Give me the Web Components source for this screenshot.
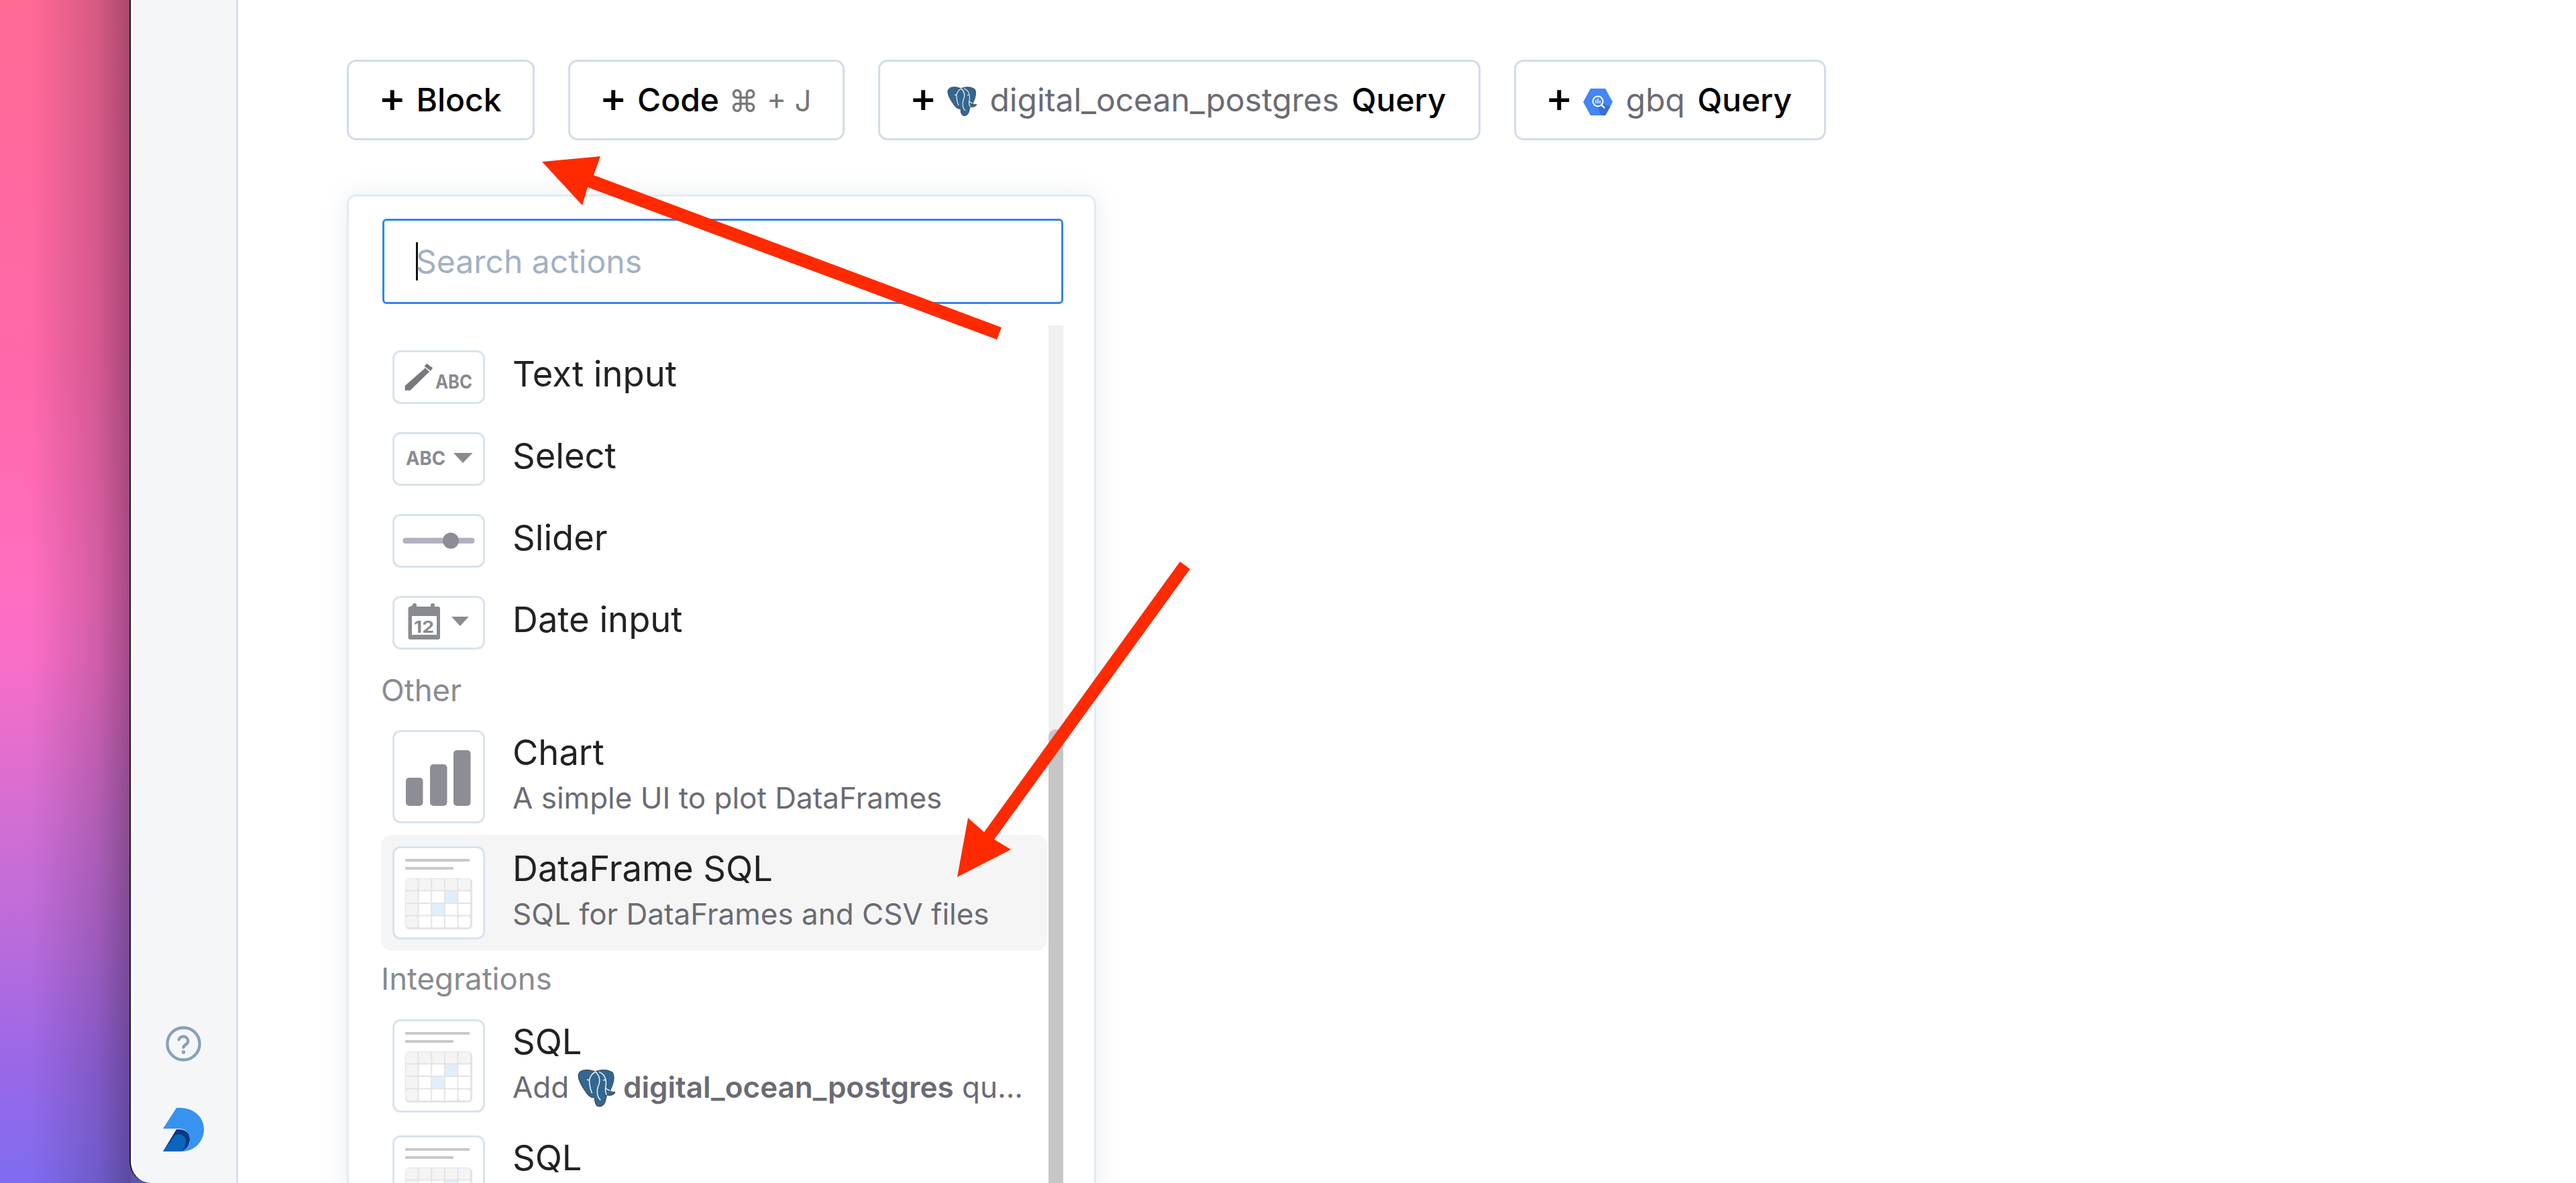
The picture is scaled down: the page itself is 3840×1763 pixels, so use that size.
<!DOCTYPE html>
<html>
<head>
<meta charset="utf-8">
<title>Add block menu</title>
<style>
  html, body { margin: 0; height: 100%; overflow: hidden; background: #fff; }
  body { font-family: Inter, "Noto Sans", sans-serif; }
</style>
</head>
<body>
<app-window>
  <add-button slot="actions"><b>Block</b></add-button>
  <add-button slot="actions"><b>Code</b> <i>⌘ + J</i></add-button>
  <add-button slot="actions"><pg-icon></pg-icon> <span>digital_ocean_postgres</span> <b class="query">Query</b></add-button>
  <add-button slot="actions"><gbq-icon></gbq-icon> <span>gbq</span> <b class="query">Query</b></add-button>
  <action-menu slot="menu">
    <menu-row icon="text" title="Text input"></menu-row>
    <menu-row icon="select" title="Select"></menu-row>
    <menu-row icon="slider" title="Slider"></menu-row>
    <menu-row icon="date" title="Date input"></menu-row>
    <menu-label>Other</menu-label>
    <menu-row big icon="chart" title="Chart">A simple UI to plot DataFrames</menu-row>
    <menu-row big active icon="sql" title="DataFrame SQL">SQL for DataFrames and CSV files</menu-row>
    <menu-label tall>Integrations</menu-label>
    <menu-row big icon="sql" title="SQL">Add <pg-icon large></pg-icon> <strong>digital_ocean_postgres</strong> qu...</menu-row>
    <menu-row big icon="sql" title="SQL">&nbsp;</menu-row>
  </action-menu>
</app-window>
<arrow-overlay></arrow-overlay>

<script>
class AppWindow extends HTMLElement {
  constructor() {
    super();
    this.shadow = this.attachShadow({ mode: "open" });
    this.shadow.innerHTML = `
    <style>
      :host { display: flex; height: 1763px; overflow: hidden; }
      .desktop {
        width: 195px;
        flex: none;
        background:
          linear-gradient(90deg, rgba(40,25,50,0) 22%, rgba(40,25,50,.1) 50%, rgba(40,25,50,.2) 75%, rgba(40,25,50,.42) 100%),
          linear-gradient(180deg, #ff6a95 0%, #ff68a8 30%, #ff6ec0 50%, #f86ec8 56%, #d06ed4 70%, #b86bdc 80%, #9a68e8 90%, #7f6cf0 100%);
      }
      .window { flex: 1; display: flex; min-width: 0; background: #5a55b0; }
      .side {
        width: 157px;
        flex: none;
        background: #f4f6f8;
        border-left: 2px solid #1c1a22;
        border-right: 3px solid #d6e0ea;
        border-bottom-left-radius: 32px;
        box-shadow: inset 3px 0 0 #fff;
        display: flex;
        flex-direction: column;
        align-items: center;
        justify-content: flex-end;
        padding-bottom: 47px;
        gap: 69px;
        margin-left: -2px;
      }
      .side svg { display: block; }
      .main { flex: 1; padding: 89px 0 0 162px; background: #fff; min-width: 0; }
      .actions { display: flex; gap: 50px; }
      .menu { margin-top: 81px; }
    </style>
    <div class="desktop"></div>
    <div class="window">
      <div class="side">
        <svg width="53" height="53" viewBox="0 0 24 24" fill="none" stroke="#88a1b8" stroke-width="2" stroke-linecap="round" stroke-linejoin="round">
          <circle cx="12" cy="12" r="10.9"/>
          <path d="M8.9 9.2a3.2 3.2 0 0 1 6.2 1c0 2.2-3.1 2.7-3.1 4.2"/>
          <path d="M12 17.6v.1" stroke-width="2.4"/>
        </svg>
        <svg width="61" height="65" viewBox="0 0 61 65">
          <path fill="#0b3a80" d="M0 65 20 32h4c10 0 17 7 16 15 0 8-5 15-12 18z"/>
          <path fill="#0a66bd" d="M0 65 18 41c3-2 8-2 11 0 4 2 6 6 5 10-1 6-3 10-7 14z"/>
          <path fill="#3793ef" d="M20 0h6c20 0 35 14 35 32 0 19-15 33-33 33h-2c10-3 15-11 14-19-1-9-7-15-16-15H0z"/>
        </svg>
      </div>
      <div class="main">
        <div class="actions"><slot name="actions"></slot></div>
        <div class="menu"><slot name="menu"></slot></div>
      </div>
    </div>
  `;
  }
}

class AddButton extends HTMLElement {
  constructor() {
    super();
    this.shadow = this.attachShadow({ mode: "open" });
    this.shadow.innerHTML = `
    <style>
      :host {
        display: flex;
        align-items: center;
        height: 120px;
        box-sizing: border-box;
        padding: 0 46px 2px 44px;
        border: 3px solid #d3dce7;
        border-radius: 14px;
        background: #fff;
        font-size: 48px;
        color: #6b6b73;
        white-space: nowrap;
      }
      .plus { font-size: 62px; font-weight: 500; color: #000; line-height: 1; margin-right: 15px; position: relative; top: -3px; }
      ::slotted(b) { font-weight: 500; color: #000; }
      ::slotted(b.query) { margin: 0 2px 0 5px; }
      ::slotted(i) { font-style: normal; color: #777; font-size: 44px; margin-left: 1px; }
      ::slotted(pg-icon), ::slotted(gbq-icon) { margin-right: 6px; }
    </style>
    <span class="plus">+</span><span><slot></slot></span>
  `;
  }
}

class PgIcon extends HTMLElement {
  constructor() {
    super();
    this.shadow = this.attachShadow({ mode: "open" });
    this.shadow.innerHTML = `
    <style>
      :host { display: inline-block; width: 44px; height: 44px; vertical-align: -7px; }
      :host([large]) { width: 56px; height: 57px; vertical-align: -14px; }
      svg { display: block; width: 100%; height: 100%; }
    </style>
    <svg viewBox="0 0 44 44">
      <path fill="#336791" stroke="#4a4a4a" stroke-width="1" d="M8 1C14 0 17 2 21 3 26 0 36 0 41 4 44 8 42 18 38 25 40 28 44 26 44 27 42 30 38 31 34 30 33 36 32 43 26 43.5 21 44 20 38 20 33 17 34 13 32 10 27 5 20 0 12 1 6 2 3 5 1 8 1Z"/>
      <path fill="none" stroke="#fff" stroke-width="1.1" d="M21 3C15 6 13 12 14 17 15 21 15 25 17 28M14 13 11 12M21 3C26 8 27 14 24 20 22 26 23 33 27 36M25 3C33 6 34 14 33 20 32 25 33 28 34 30M30 13 33 12M38 25C36 24 34 24 33 22"/>
    </svg>
  `;
  }
}

class GbqIcon extends HTMLElement {
  constructor() {
    super();
    this.shadow = this.attachShadow({ mode: "open" });
    this.shadow.innerHTML = `
    <style>
      :host { display: inline-block; width: 44px; height: 40px; vertical-align: -6px; }
      svg { display: block; width: 100%; height: 100%; }
    </style>
    <svg viewBox="0 0 44 40">
      <path fill="#4386f5" d="M11 0H33L44 20 33 40H11L0 20Z"/>
      <path fill="#3a6fd0" d="M26 26 30 23 40.7 27 33 40H27L22 28Z"/>
      <circle cx="22" cy="19" r="7.5" fill="none" stroke="#fff" stroke-width="2"/>
      <path stroke="#fff" stroke-width="2.4" d="M27.5 24.5 32 29"/>
      <path stroke="#fff" stroke-width="1.5" d="M19 17v5M22 15v7M25 18v4"/>
    </svg>
  `;
  }
}

const gridCells = () => {
  let out = "";
  for (let r = 0; r < 4; r++) {
    for (let c = 0; c < 5; c++) {
      const x = 19 + c * 19.6, y = 48 + r * 18.5;
      let fill = r === 0 || c === 0 ? "#f4f4f4" : "#fff";
      if ((r === 1 && c === 3) || (r === 2 && c === 2)) fill = "#e0eefc";
      const corner = (r === 0 || r === 3) && (c === 0 || c === 4);
      out += `<rect x="${x + 1}" y="${y + 1}" width="17.6" height="16.5" rx="${corner ? 4 : 0}" fill="${fill}"/>`;
    }
  }
  return out;
};

const ICONS = {
  text: `<svg viewBox="0 0 138 80" fill="#77787e">
      <path d="M18.6 53 49 26.3 55 32 26.6 59.7H18.6z"/>
      <path d="M51 19.7 60 26.3 57 30.7 47.6 24z"/>
      <text x="64" y="57" font-size="29" font-weight="700" textLength="55" lengthAdjust="spacingAndGlyphs" fill="#8a8b91">ABC</text>
    </svg>`,
  select: `<svg viewBox="0 0 138 80" fill="#8a8b91">
      <text x="20" y="49" font-size="29" font-weight="700" textLength="59" lengthAdjust="spacingAndGlyphs">ABC</text>
      <path d="M91 31h28.500L105 46z"/>
    </svg>`,
  slider: `<svg viewBox="0 0 138 80">
      <rect x="15.400" y="35.600" width="107" height="8.500" rx="4" fill="#b2b2bf"/>
      <ellipse cx="87" cy="39.700" rx="12" ry="12" fill="#8d8d99"/>
    </svg>`,
  date: `<svg viewBox="0 0 138 80" fill="#8a8b91">
      <path d="M30 14a3 3 0 0 1 6 0v2h21v-2a3 3 0 0 1 6 0v2h5a3 3 0 0 1 3 3v43a3 3 0 0 1-3 3H26.500a3 3 0 0 1-3-3V19a3 3 0 0 1 3-3z"/>
      <rect x="29" y="30" width="37" height="28" fill="#fff"/>
      <text x="32" y="55" font-size="24" font-weight="700" textLength="30" lengthAdjust="spacingAndGlyphs">12</text>
      <path d="M88 31h25.700L101 45z"/>
    </svg>`,
  chart: `<svg viewBox="0 0 138 139" fill="#8d8d95">
      <rect x="20" y="71" width="25.5" height="42" rx="5"/>
      <rect x="56" y="51" width="25.5" height="62" rx="5"/>
      <rect x="91" y="30" width="25.5" height="83" rx="5"/>
    </svg>`,
  sql: `<svg viewBox="0 0 138 139">
      <rect x="19" y="19" width="96" height="4" fill="#c9c9c9"/>
      <rect x="19" y="31" width="72" height="4" fill="#c9c9c9"/>
      <rect x="19" y="48" width="100" height="76" rx="6" fill="#e4e4e4"/>
      ${gridCells()}
    </svg>`
};

class MenuRow extends HTMLElement {
  constructor() {
    super();
    this.shadow = this.attachShadow({ mode: "open" });
  }

  render() {
    this.shadow.innerHTML = `
    <style>
      :host {
        display: flex;
        align-items: center;
        height: 122px;
        padding-left: 17px;
        gap: 41px;
        border-radius: 16px;
        white-space: nowrap;
      }
      :host([big]) { height: 173px; }
      :host([active]) { background: #f5f5f5; }
      .thumb {
        width: 138px;
        height: 80px;
        flex: none;
        box-sizing: border-box;
        border: 3px solid #d9e3ed;
        border-radius: 12px;
        background: #fff;
        overflow: hidden;
      }
      :host([big]) .thumb { height: 139px; }
      svg { display: block; width: calc(100% + 6px); height: calc(100% + 6px); margin: -3px; }
      .text { padding-bottom: 10px; }
      :host([big]) .text { padding-bottom: 5px; }
      .title { font-size: 52.5px; color: #222; line-height: 68px; }
      .desc { font-size: 44px; color: #6b6b73; line-height: 68px; }
      .desc ::slotted(strong) { font-weight: 600; }
    </style>
    <div class="thumb">${ICONS[this.getAttribute("icon")]}</div>
    <div class="text">
      <div class="title">${this.getAttribute("title")}</div>
      ${this.hasAttribute("big") ? '<div class="desc"><slot></slot></div>' : ""}
    </div>
  `;
  }

  connectedCallback() {
    this.render();
  }
}

class MenuLabel extends HTMLElement {
  constructor() {
    super();
    this.shadow = this.attachShadow({ mode: "open" });
    this.shadow.innerHTML = `
    <style>
      :host { display: block; height: 82px; line-height: 80px; font-size: 45.5px; color: #8a8a92; }
      :host([tall]) { height: 85px; line-height: 84px; }
    </style>
    <slot></slot>
  `;
  }
}

class ActionMenu extends HTMLElement {
  constructor() {
    super();
    this.shadow = this.attachShadow({ mode: "open" });
    this.shadow.innerHTML = `
    <style>
      :host {
        display: block;
        width: 1117px;
        height: 1500px;
        box-sizing: border-box;
        padding: 33px 46px 0 50px;
        border: 3px solid #e4eaf1;
        border-radius: 14px;
        background: #fff;
        box-shadow: 0 0 34px rgba(120,135,155,.16);
      }
      .search {
        height: 127px;
        box-sizing: border-box;
        border: 3px solid #2f86eb;
        border-radius: 6px;
        padding-left: 47px;
        display: flex;
        align-items: center;
        font-size: 48px;
        color: #a3b1c4;
      }
      .caret { width: 3px; height: 57px; background: #111; margin-right: -3px; flex: none; }
      .body { display: flex; margin: 32px 0 0 -2px; height: 1300px; }
      .list { flex: 1; min-width: 0; padding-top: 16px; margin-right: 2px; }
      .track { width: 22px; flex: none; background: #f0f0f0; padding-top: 602px; box-sizing: border-box; display: flex; }
      .thumb { flex: 1; background: #c6c6c6; border-radius: 11px 11px 0 0; }
    </style>
    <div class="search"><span class="caret"></span>Search actions</div>
    <div class="body">
      <div class="list"><slot></slot></div>
      <div class="track"><div class="thumb"></div></div>
    </div>
  `;
  }
}

class ArrowOverlay extends HTMLElement {
  constructor() {
    super();
    this.shadow = this.attachShadow({ mode: "open" });
    this.shadow.innerHTML = `
    <style>
      :host { position: absolute; left: 0; top: 0; width: 3840px; height: 1763px; pointer-events: none; }
      svg { display: block; }
    </style>
    <svg width="3840" height="1763" viewBox="0 0 3840 1763" fill="#ff2a00">
      <path d="M808 241 895 233 885 261 1493 488 1486 506 876 279 868 306Z"/>
      <path d="M1427 1307 1443 1219 1467 1240 1759 837 1774 848 1482 1251 1507 1266Z"/>
    </svg>
  `;
  }
}

window.customElements.define("app-window", AppWindow);
window.customElements.define("add-button", AddButton);
window.customElements.define("pg-icon", PgIcon);
window.customElements.define("gbq-icon", GbqIcon);
window.customElements.define("menu-row", MenuRow);
window.customElements.define("menu-label", MenuLabel);
window.customElements.define("action-menu", ActionMenu);
window.customElements.define("arrow-overlay", ArrowOverlay);
</script>
</body>
</html>
